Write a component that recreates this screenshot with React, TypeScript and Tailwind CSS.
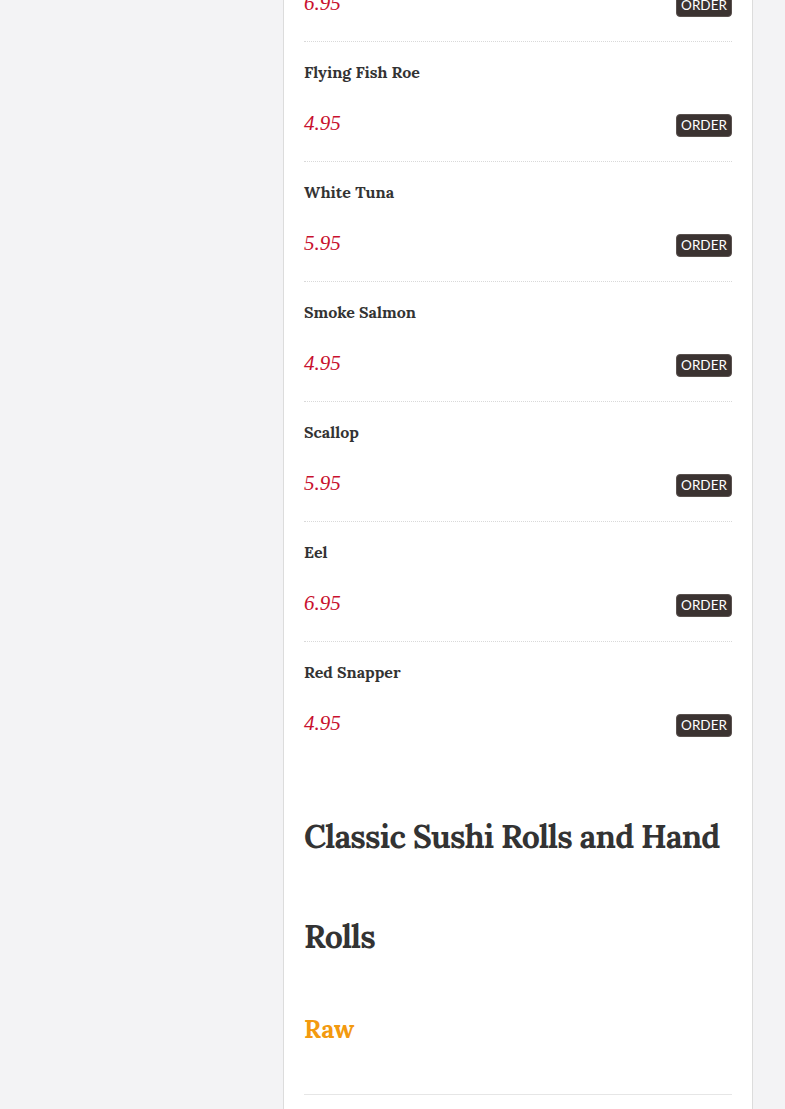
import React from "react";

type MenuItem = {
  name: string;
  price: string;
};

const items: MenuItem[] = [
  { name: "Salmon Roe", price: "6.95" },
  { name: "Flying Fish Roe", price: "4.95" },
  { name: "White Tuna", price: "5.95" },
  { name: "Smoke Salmon", price: "4.95" },
  { name: "Scallop", price: "5.95" },
  { name: "Eel", price: "6.95" },
  { name: "Red Snapper", price: "4.95" },
];

const serif = "font-['Lora','Liberation_Serif','DejaVu_Serif',serif]";

function ItemRow({ item, first }: { item: MenuItem; first: boolean }) {
  return (
    <div
      className={
        first
          ? "-mt-[78px] pt-[18px] pb-[26px]"
          : "border-t border-dotted border-[#d9d9d9] pt-[18px] pb-[26px]"
      }
    >
      <h4 className={`${serif} text-[16px] font-bold leading-[24px] text-[#333333]`}>
        {item.name}
      </h4>
      <div className="mt-[27px] flex h-[24px] items-center justify-between">
        <span className="font-['Liberation_Serif',serif] text-[21px] italic leading-[24px] text-[#c8102e]">
          {item.price}
        </span>
        <button
          type="button"
          className="mt-[5px] flex h-[23px] w-[56px] items-center justify-center rounded-[4px] border border-[#5a514e] bg-[#3b3331] font-['Lato','Liberation_Sans',sans-serif] text-[13.5px] leading-none text-white"
        >
          ORDER
        </button>
      </div>
    </div>
  );
}

export default function App() {
  return (
    <div className="flex h-[1109px] w-full overflow-hidden bg-[#f3f3f5]">
      <div className="w-[283px] shrink-0" />
      <div className="w-[470px] shrink-0 border-x border-[#dcdcdc] bg-white px-[20px]">
        {items.map((item, i) => (
          <ItemRow key={item.name} item={item} first={i === 0} />
        ))}

        <h2
          className={`${serif} mt-[26px] text-[32px] font-bold leading-[100px] tracking-[-0.8px] text-[#333333]`}
        >
          Classic Sushi Rolls and Hand Rolls
        </h2>

        <h3
          className={`${serif} mt-[24px] text-[25px] font-bold leading-[36px] text-[#f39a0f]`}
        >
          Raw
        </h3>

        <div className="mt-[47px] border-t border-[#e6e6e6]" />
      </div>
    </div>
  );
}
